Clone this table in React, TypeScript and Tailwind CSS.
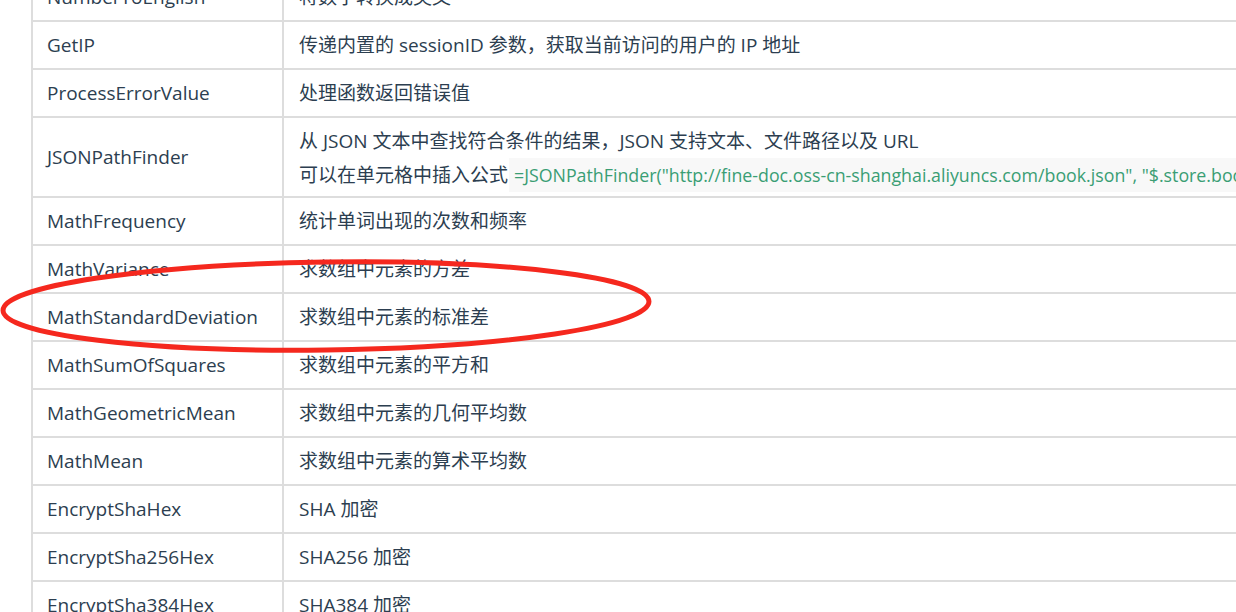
import React from "react";

const rows: { name: string; desc: React.ReactNode; tall?: boolean }[] = [
  { name: "NumberToEnglish", desc: "将数字转换成英文" },
  { name: "GetIP", desc: "传递内置的 sessionID 参数，获取当前访问的用户的 IP 地址" },
  { name: "ProcessErrorValue", desc: "处理函数返回错误值" },
  {
    name: "JSONPathFinder",
    tall: true,
    desc: (
      <div className="leading-[34px]">
        <div>从 JSON 文本中查找符合条件的结果，JSON 支持文本、文件路径以及 URL</div>
        <div className="whitespace-nowrap">
          可以在单元格中插入公式
          <span className="inline-block bg-[#f8f8f8] ml-[1px] px-[5px] text-[#3a9e74] text-[17.8px] leading-[34px]">
            =JSONPathFinder("http://fine-doc.oss-cn-shanghai.aliyuncs.com/book.json", "$.store.book[0].title")
          </span>
        </div>
      </div>
    ),
  },
  { name: "MathFrequency", desc: "统计单词出现的次数和频率" },
  { name: "MathVariance", desc: "求数组中元素的方差" },
  { name: "MathStandardDeviation", desc: "求数组中元素的标准差" },
  { name: "MathSumOfSquares", desc: "求数组中元素的平方和" },
  { name: "MathGeometricMean", desc: "求数组中元素的几何平均数" },
  { name: "MathMean", desc: "求数组中元素的算术平均数" },
  { name: "EncryptShaHex", desc: "SHA 加密" },
  { name: "EncryptSha256Hex", desc: "SHA256 加密" },
  { name: "EncryptSha384Hex", desc: "SHA384 加密" },
];

export default function App() {
  return (
    <div
      className="relative w-[1236px] h-[612px] overflow-hidden bg-white text-[#2c3e50]"
      style={{ fontFamily: '"Open Sans", "Noto Sans CJK SC", sans-serif' }}
    >
      <div className="-mt-[28px] ml-[31px] w-[1400px] border-l-2 border-[#dddddd]">
        {rows.map((r) => (
          <div key={r.name} className="flex border-t-2 border-[#dddddd]">
            <div
              className={`w-[251px] shrink-0 border-r-2 border-[#dddddd] pl-[14px] flex items-center text-[19px] ${
                r.tall ? "h-[78px]" : "h-[46px]"
              }`}
            >
              {r.name}
            </div>
            <div
              className={`flex-1 pl-[15px] flex items-center whitespace-nowrap text-[19px] ${
                r.tall ? "h-[78px] pt-[2px]" : "h-[46px]"
              }`}
            >
              {r.desc}
            </div>
          </div>
        ))}
      </div>
      <svg
        className="absolute left-0 top-0 pointer-events-none"
        width="1236"
        height="612"
        viewBox="0 0 1236 612"
      >
        <ellipse
          cx="326"
          cy="306"
          rx="323"
          ry="44"
          fill="none"
          stroke="#f5281e"
          strokeWidth="5"
          transform="rotate(-0.8 326 306)"
        />
      </svg>
    </div>
  );
}
